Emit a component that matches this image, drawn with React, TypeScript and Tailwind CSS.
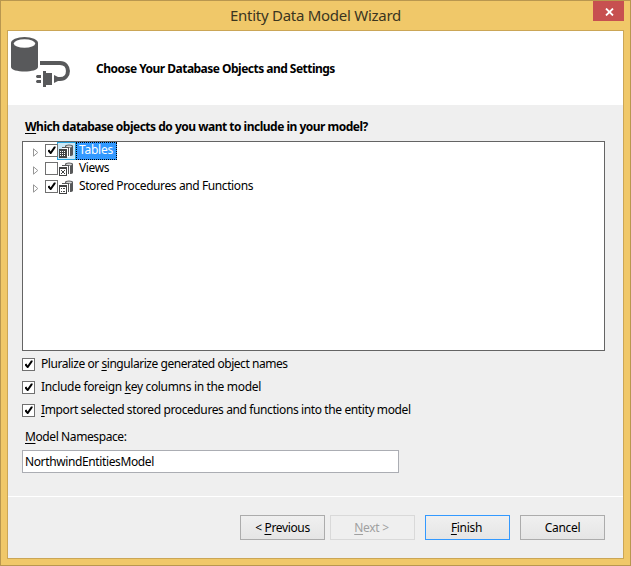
import React from 'react';

interface CheckBoxProps {
  checked: boolean;
}

const CheckBox: React.FC<CheckBoxProps> = ({ checked }) => {
  return <span className="block w-[13px] h-[13px] shrink-0 border border-[#707070] bg-white">
      {checked && <svg width="11" height="11" viewBox="0 0 11 11" className="block">
          <path d="M2 5.2 L3.4 4.6 L4.6 6.4 L8 1.6 L9.6 1.6 L9.6 2.8 L5.2 9 L4.2 9 L2 6.4 Z" fill="#000" />
        </svg>}
    </span>;
};

type Glyph = 'table' | 'view' | 'procedure';

const ObjectIcon: React.FC<{ glyph: Glyph }> = ({ glyph }) => {
  return <svg width="16" height="16" viewBox="0 0 16 16" className="block shrink-0" shapeRendering="crispEdges">
      {/* database cylinder */}
      <g shapeRendering="auto">
        <path d="M7 2.5 V12 H11 Q15 12 15 10.5 V2.5 Z" fill="#575859" />
        <ellipse cx="11" cy="2.4" rx="4" ry="1.9" fill="#575859" />
        <ellipse cx="11" cy="2.4" rx="3" ry="1" fill="#d8d8d8" />
      </g>
      {/* page behind */}
      <path d="M4 4 H12 V13 H4 Z" fill="#fff" />
      <path d="M4 3 H11 V12 H10 V4 H4 Z" fill="#575859" />
      {/* object in front */}
      <path d="M1 5 H9 V14 H1 Z" fill="#424344" />
      {glyph === 'table' && <path d="M2 7h1v1h-1z M4 7h1v1h-1z M6 7h1v1h-1z M2 9h1v1h-1z M4 9h1v1h-1z M6 9h1v1h-1z M2 11h1v1h-1z M4 11h1v1h-1z M6 11h1v1h-1z" fill="#fff" />}
      {glyph === 'view' && <path d="M2 7h6v6h-6z M3 8v1h1v-1z M6 8v1h1v-1z M3 11v1h1v-1z M6 11v1h1v-1z M4 9v2h2v-2z" fill="#fff" fillRule="evenodd" />}
      {glyph === 'procedure' && <path d="M2 7h6v6h-6z M3 8v1h1v-1z M5 8v1h2v-1z M3 11v1h1v-1z M5 11v1h2v-1z" fill="#fff" fillRule="evenodd" />}
    </svg>;
};

interface TreeRowProps {
  label: string;
  glyph: Glyph;
  checked: boolean;
  selected?: boolean;
  tracking: string;
}

const TreeRow: React.FC<TreeRowProps> = ({ label, glyph, checked, selected, tracking }) => {
  return <div className="flex h-[18px] items-start">
      <svg width="6" height="9" viewBox="0 0 6 9" className="mt-1.5 ml-2.5 mr-1.5 block shrink-0">
        <path d="M0.5 0.8 V8.2 L4.8 4.5 Z" fill="#fff" stroke="#969696" />
      </svg>
      <div className="relative z-10 mt-0.5">
        <CheckBox checked={checked} />
      </div>
      <div className={`-ml-px flex h-[18px] w-[19px] items-start border pt-px ${selected ? 'border-[#26a0da] bg-[#cbe8f6]' : 'border-transparent'}`}>
        <ObjectIcon glyph={glyph} />
      </div>
      <div className={`flex h-[18px] items-center whitespace-nowrap ${selected ? 'w-[41px] border border-dotted border-black bg-[#3399ff] pl-0.5 text-white' : 'pl-[3px]'}`}>
        <span className={`relative -top-px ${tracking}`}>{label}</span>
      </div>
    </div>;
};

interface OptionProps {
  before: string;
  accessKey: string;
  after: string;
  tracking: string;
}

const Option: React.FC<OptionProps> = ({ before, accessKey, after, tracking }) => {
  return <label className="flex h-[23px] items-start whitespace-nowrap">
      <CheckBox checked />
      <span className={`ml-1.5 -mt-0.5 leading-4 ${tracking}`}>{before}<u className="underline-offset-2">{accessKey}</u>{after}</span>
    </label>;
};

interface WizardButtonProps {
  children: React.ReactNode;
  className: string;
}

const WizardButton: React.FC<WizardButtonProps> = ({ children, className }) => {
  return <button className={`h-[25px] w-[85px] whitespace-nowrap border leading-[23px] ${className}`}>
      {children}
    </button>;
};

const DatabasePlug: React.FC = () => {
  return <svg width="62" height="54" viewBox="0 0 62 54" className="block shrink-0">
      <path d="M1 6 V30 C1 36 28 36 28 30 V6 Z" fill="#58595b" />
      <ellipse cx="14.5" cy="6" rx="13.5" ry="6" fill="#58595b" />
      <ellipse cx="14.5" cy="6.5" rx="10.7" ry="4.3" fill="#fff" />
      <path d="M30 26 H50 C60.6 26 60.6 42 50 42 H47" fill="none" stroke="#58595b" strokeWidth="4" />
      <path d="M44 38 L48 40 V44 L44 46 Z M37 36 H42 V48 H36 V50 H33 V34 H36 V36 Z M27 38 H31 V41 H27 Q25 39.5 27 38 Z M27 43 H31 V46 H27 Q25 44.5 27 43 Z" fill="#58595b" />
    </svg>;
};

export default function App() {
  return <div className="flex h-[566px] w-[631px] flex-col border border-[#b9974f] bg-[#f0c869] px-1.5 pb-1.5 font-['Noto_Sans','Open_Sans',sans-serif] text-[12px] text-black">
      <header className="flex h-[29px] shrink-0 items-start">
        <h1 className="ml-[31px] flex-1 pt-[3px] text-center text-[15px] leading-[22px] text-[#3b351f]">
          <span className="tracking-[-0.27px]">Entity Data Model Wizard</span>
        </h1>
        <button className="flex h-5 w-[31px] items-center justify-center bg-[#c75050] pl-px pt-0.5">
          <svg width="9" height="8" viewBox="0 0 9 8">
            <path d="M1 0.5 L8 7.5 M8 0.5 L1 7.5" stroke="#fff" strokeWidth="1.8" />
          </svg>
        </button>
      </header>

      <main className="flex flex-1 flex-col border border-[#cba656] bg-[#efefef]">
        <div className="flex h-[74px] shrink-0 bg-white pl-0.5 pt-1.5">
          <DatabasePlug />
          <h2 className="ml-6 mt-6 whitespace-nowrap font-bold leading-4 tracking-[-0.52px]">Choose Your Database Objects and Settings</h2>
        </div>

        <div className="flex h-[391px] shrink-0 flex-col px-3.5 pt-3.5">
          <h3 className="ml-[3px] h-[22px] whitespace-nowrap font-bold leading-4 tracking-[-0.5px]"><u className="underline-offset-2">W</u>hich database objects do you want to include in your model?</h3>

          <div className="h-[210px] w-[583px] border border-[#646464] bg-white">
            <TreeRow label="Tables" glyph="table" checked selected tracking="tracking-[-0.25px]" />
            <TreeRow label="Views" glyph="view" checked={false} tracking="tracking-[-0.35px]" />
            <TreeRow label="Stored Procedures and Functions" glyph="procedure" checked tracking="tracking-[-0.4px]" />
          </div>

          <div className="mt-[7px] h-[71px]">
            <Option before="Pluralize or " accessKey="s" after="ingularize generated object names" tracking="tracking-[-0.45px]" />
            <Option before="Include foreign " accessKey="k" after="ey columns in the model" tracking="tracking-[-0.33px]" />
            <Option before="" accessKey="I" after="mport selected stored procedures and functions into the entity model" tracking="tracking-[-0.39px]" />
          </div>

          <label className="ml-[3px] h-[21px] leading-4 tracking-[-0.4px]"><u className="underline-offset-2">M</u>odel Namespace:</label>
          <input className="h-[23px] w-[377px] border border-[#abadb3] bg-white px-0.5 pb-px tracking-[-0.38px]" defaultValue="NorthwindEntitiesModel" />
        </div>

        <footer className="flex flex-1 items-start border-t border-white pl-[232px] pt-[18px]">
          <WizardButton className="border-[#acacac] bg-linear-to-b from-[#f0f0f0] to-[#e5e5e5] tracking-[-0.35px]">&lt; <u className="underline-offset-2">P</u>revious</WizardButton>
          <WizardButton className="ml-[5px] border-[#d9d9d9] bg-[#efefef] pr-0.5 text-[#a0a0a0] tracking-[-0.3px]"><u className="underline-offset-2">N</u>ext &gt;</WizardButton>
          <WizardButton className="ml-2.5 border-[#3399ff] bg-linear-to-b from-[#f0f0f0] to-[#e5e5e5] pr-0.5 tracking-[-0.3px]"><u className="underline-offset-2">F</u>inish</WizardButton>
          <WizardButton className="ml-2.5 border-[#acacac] bg-linear-to-b from-[#f0f0f0] to-[#e5e5e5] tracking-[-0.3px]">Cancel</WizardButton>
        </footer>
      </main>
    </div>;
}
